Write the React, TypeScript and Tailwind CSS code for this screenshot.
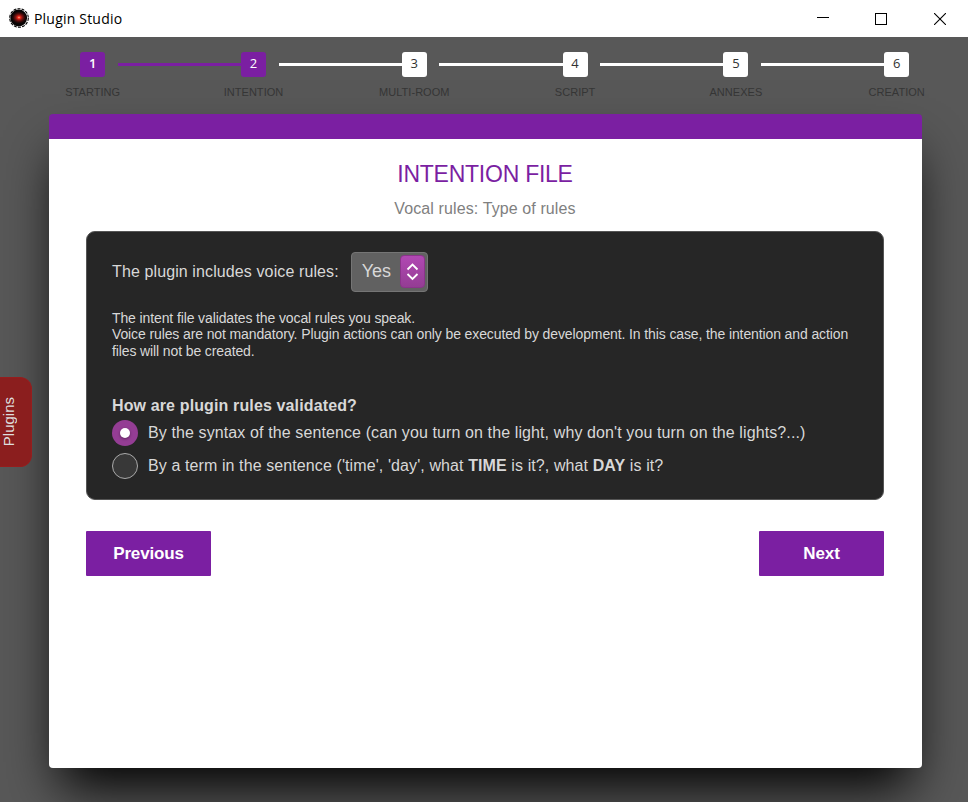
import React from "react";

const steps = ["STARTING", "INTENTION", "MULTI-ROOM", "SCRIPT", "ANNEXES", "CREATION"];

function TitleBar() {
  return (
    <header className="flex h-[37px] items-center justify-between bg-white pl-[9px] pr-[22px]">
      <div className="flex items-center gap-[5px]">
        <svg className="mb-[2px]" width="20" height="20" viewBox="0 0 20 20">
          <defs>
            <radialGradient id="eye">
              <stop offset="0" stopColor="#ffb090" />
              <stop offset="0.2" stopColor="#f02a1c" />
              <stop offset="0.42" stopColor="#8a1512" />
              <stop offset="0.75" stopColor="#2e0808" />
              <stop offset="1" stopColor="#080404" />
            </radialGradient>
          </defs>
          <circle cx="10" cy="10" r="9.3" fill="#fff" stroke="#000" strokeWidth="1.1" strokeDasharray="3 1.2" />
          <circle cx="9.7" cy="10" r="8.4" fill="#080404" />
          <ellipse cx="10" cy="9.5" rx="7.5" ry="6.2" fill="url(#eye)" />
        </svg>
        <span className="whitespace-nowrap font-['Open_Sans','Noto_Sans',sans-serif] text-[14px] leading-5 tracking-[0.2px] text-black">
          Plugin Studio
        </span>
      </div>
      <div className="flex items-center">
        <svg className="mr-[46px]" width="12" height="12" viewBox="0 0 12 12" shapeRendering="crispEdges">
          <path d="M0 4.5h12" stroke="#000" />
        </svg>
        <svg className="mr-[47px]" width="12" height="12" viewBox="0 0 12 12" shapeRendering="crispEdges">
          <path d="M.5 .5h11v11H.5z" fill="none" stroke="#000" />
        </svg>
        <svg width="12" height="12" viewBox="0 0 12 12">
          <path d="M0 0l12 12M12 0L0 12" stroke="#000" strokeWidth="1.1" />
        </svg>
      </div>
    </header>
  );
}

function Stepper() {
  return (
    <nav className="flex pl-[80.2px]">
      {steps.map((label, i) => {
        const active = i < 2;
        return (
          <div key={label} className="w-[160.8px] shrink-0">
            <div className="flex h-[25px] items-center">
              <div
                className={
                  "flex h-[25px] w-[25px] shrink-0 justify-center rounded-[3px] pt-[1px] font-['Open_Sans','Noto_Sans',sans-serif] text-[13px] leading-[20px] " +
                  (active ? "bg-[#7b1fa2] text-white " : "bg-white text-[#333] ") +
                  (i === 0 ? "font-semibold" : "")
                }
              >
                {i + 1}
              </div>
              {i < 5 && (
                <div className={"ml-[12.7px] h-[3px] flex-1 " + (i === 0 ? "bg-[#7b1fa2]" : "bg-white")} />
              )}
            </div>
            <div className="mt-[7px] flex w-[25px] justify-center whitespace-nowrap text-[11px] leading-4 tracking-[0.04px] text-[#363636]">
              {label}
            </div>
          </div>
        );
      })}
    </nav>
  );
}

export default function App() {
  return (
    <div className="relative flex h-[802px] w-[968px] flex-col overflow-hidden bg-[#585858] font-['Liberation_Sans',Arial,sans-serif]">
      <TitleBar />
      <div className="mt-[15px]">
        <Stepper />
      </div>
      <main className="ml-[49px] mt-[14px] flex h-[654px] w-[873px] flex-col rounded-[4px] shadow-[0_30px_50px_-11px_#000]">
        <div className="h-[25px] rounded-t-[4px] bg-[#7b1fa2]" />
        <div className="flex-1 rounded-b-[4px] bg-white pl-[37px] pr-[38px]">
          <h1 className="mt-[21px] text-center text-[23px] leading-7 tracking-[-0.25px] text-[#7b1fa2]">INTENTION FILE</h1>
          <p className="mt-[11px] text-center text-[16px] leading-5 tracking-[0.11px] text-[#808080]">Vocal rules: Type of rules</p>
          <section className="mt-[12px] h-[269px] rounded-[9px] border border-[#555] bg-[#262626] px-[25px] pt-[20px] text-[16px] tracking-[0.11px] text-[#d8d8d8]">
            <div className="flex h-10 items-center">
              <span className="whitespace-nowrap leading-5">The plugin includes voice rules:</span>
              <button className="ml-3 flex h-10 w-[77px] items-center justify-between rounded-[4px] border border-[#757575] bg-[#616161] pl-[10px] pr-[2px]">
                <span className="pb-[2px] text-[18px] leading-5 tracking-[-0.1px]">Yes</span>
                <span className="mb-[1px] flex h-[33px] w-[25px] items-center justify-center rounded-[4px] border border-[#8b348b] bg-linear-to-b from-[#b148b3] to-[#943d94]">
                  <svg width="13" height="19" viewBox="0 0 13 19" fill="none" stroke="#fff" strokeWidth="1.8">
                    <path d="M1.5 7.5l5-5 5 5M1.5 12l5 5 5-5" />
                  </svg>
                </span>
              </button>
            </div>
            <p className="mt-[17.7px] whitespace-nowrap text-[14px] leading-[16.5px] tracking-[-0.115px]">
              The intent file validates the vocal rules you speak.
              <br />
              Voice rules are not mandatory. Plugin actions can only be executed by development. In this case, the intention and action
              <br />
              files will not be created.
            </p>
            <h2 className="mt-[36.8px] text-[16px] font-bold leading-5 tracking-[0.13px]">How are plugin rules validated?</h2>
            <div className="mt-[4px] flex h-[26px] items-center gap-[10px]">
              <span className="flex h-[26px] w-[26px] items-center justify-center rounded-full bg-[#943d94]">
                <span className="h-[10px] w-[10px] rounded-full bg-white shadow-[0_1px_3px_rgba(0,0,0,0.4)]" />
              </span>
              <span className="whitespace-nowrap leading-5">By the syntax of the sentence (can you turn on the light, why don't you turn on the lights?...)</span>
            </div>
            <div className="mt-[7px] flex h-[26px] items-center gap-[10px]">
              <span className="h-[26px] w-[26px] rounded-full border border-[#aaa] bg-[#383838]" />
              <span className="whitespace-nowrap leading-5 tracking-[0.1px]">
                By a term in the sentence ('time', 'day', what <b>TIME</b> is it?, what <b>DAY</b> is it?
              </span>
            </div>
          </section>
          <div className="mt-[31px] flex justify-between">
            <button className="h-[45px] w-[125px] rounded-[1px] bg-[#7b1fa2] text-[17px] font-bold tracking-[-0.15px] text-white">Previous</button>
            <button className="h-[45px] w-[125px] rounded-[1px] bg-[#7b1fa2] text-[17px] font-bold tracking-[-0.1px] text-white">Next</button>
          </div>
        </div>
      </main>
      <aside className="absolute left-0 top-[377px] flex h-[90px] w-8 items-center rounded-r-[12px] border border-l-0 border-[#961d1d] bg-[#8b1e1e]">
        <span className="w-[18px] rotate-180 text-[15px] leading-[18px] text-[#dedede] [writing-mode:vertical-rl]">Plugins</span>
      </aside>
    </div>
  );
}
